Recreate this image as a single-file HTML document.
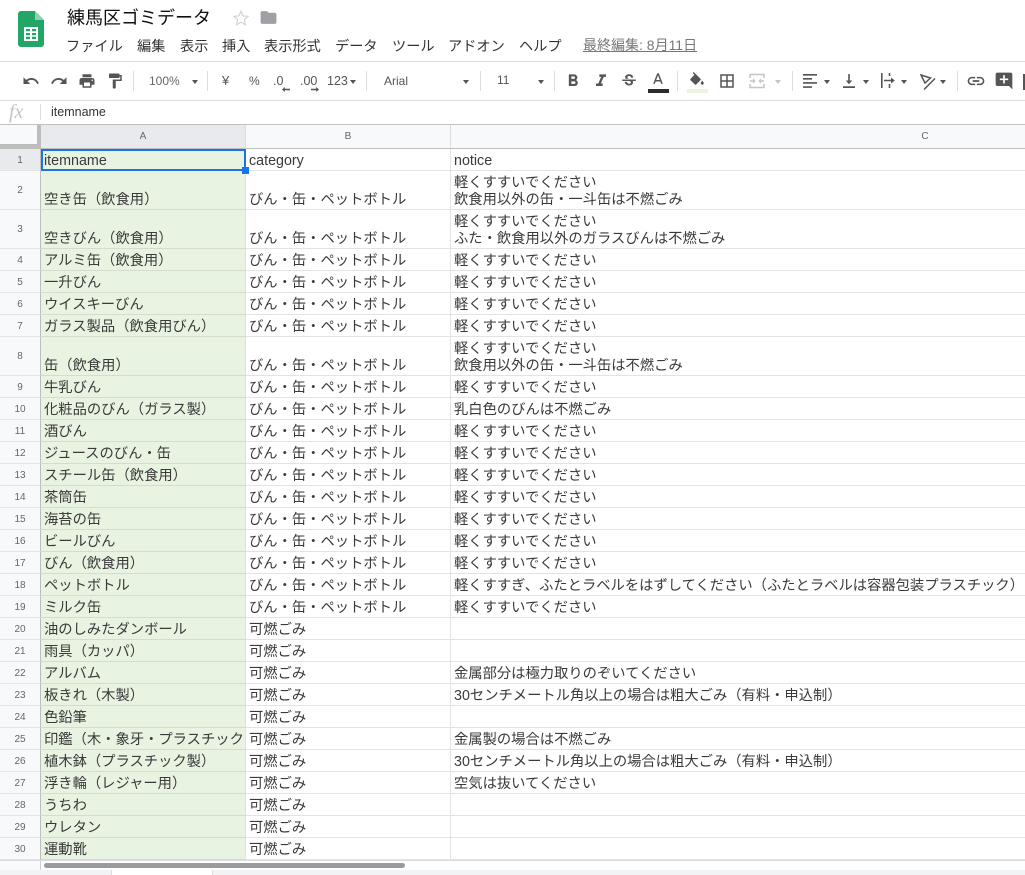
<!DOCTYPE html>
<html lang="ja"><head><meta charset="utf-8"><title>練馬区ゴミデータ</title>
<style>
html,body{margin:0;padding:0;background:#fff}
body{width:1025px;height:875px;position:relative;overflow:hidden;font-family:"Liberation Sans","Noto Sans CJK JP",sans-serif;color:#222}
.a{position:absolute;white-space:nowrap}
.m{top:39px;font-size:14.2px;line-height:16px;color:#333}
.t{top:73px;font-size:12px;line-height:16px;color:#555}
.s{position:absolute;top:71px;width:1px;height:20px;background:#dadce0}
.h{position:absolute;left:0;height:1px;width:1025px;background:#dadce0}
.ar{position:absolute;width:0;height:0;border-left:3.5px solid transparent;border-right:3.5px solid transparent;border-top:4px solid #555}
svg.i{position:absolute;fill:#555}
table{position:absolute;left:0;top:149px;border-collapse:separate;border-spacing:0;table-layout:fixed;width:1025px}
td,th{padding:0 0 0 3px;box-sizing:border-box;border-right:1px solid #e2e3e3;border-bottom:1px solid #e2e3e3;font-weight:normal;font-size:14.3px;line-height:17px;vertical-align:bottom;white-space:nowrap;overflow:hidden;color:#3a3a3a}
td:last-child{border-right:0}
th{background:#f8f9fa;font-size:10px;color:#666;text-align:center;padding:1px 0 0;vertical-align:middle;border-right:1px solid #bdbdbd;border-bottom:1px solid #e2e3e3}
td.g{background:#e8f3e2;border-bottom-color:#d3dccf;border-right-color:#dfe3dd}
tr{height:22px}tr.w{height:39px}
.ch{position:absolute;top:125px;height:23px;background:#f8f9fa;border-right:1px solid #dadce0;border-bottom:1px solid #bdbdbd;font-size:10px;line-height:23px;color:#666;text-align:center}
</style></head><body>
<svg class="a" style="left:18px;top:11px" width="26" height="36" viewBox="0 0 26 36"><path d="M3 0h14l9 9v24a3 3 0 0 1-3 3H3a3 3 0 0 1-3-3V3a3 3 0 0 1 3-3z" fill="#23a566"/><path d="M17 0l9 9h-9z" fill="#8ed1b1"/><path d="M6 16h14v14H6z" fill="#fff"/><path d="M8 18h4v2.300H8zm6 0h4v2.300h-4zM8 22h4v2.300H8zm6 0h4v2.300h-4zM8 25.800h4v2.300H8zm6 0h4v2.300h-4z" fill="#23a566"/></svg>
<div class="a" style="left:67px;top:7px;font-size:18px;line-height:22px;color:#111">練馬区ゴミデータ</div>
<svg class="a" style="left:232px;top:9px" width="18" height="18" viewBox="0 0 24 24"><path d="M12 3l2.700 6.200 6.800.6-5.100 4.500 1.500 6.700L12 17.500 6.100 21l1.500-6.700L2.500 9.800l6.800-.6z" fill="none" stroke="#d0d0d0" stroke-width="1.500"/></svg>
<svg class="a" style="left:259px;top:8px;fill:#9fa0a3" width="19" height="19" viewBox="0 0 24 24"><path d="M10 4H4c-1.100 0-1.990.9-1.990 2L2 18c0 1.100.9 2 2 2h16c1.100 0 2-.9 2-2V8c0-1.100-.9-2-2-2h-8l-2-2z"/></svg>
<div class="a m" style="left:66px">ファイル</div><div class="a m" style="left:137px">編集</div><div class="a m" style="left:180px">表示</div><div class="a m" style="left:222px">挿入</div><div class="a m" style="left:264px">表示形式</div><div class="a m" style="left:335px">データ</div><div class="a m" style="left:392px">ツール</div><div class="a m" style="left:448px">アドオン</div><div class="a m" style="left:519px">ヘルプ</div>
<div class="a m" style="left:583px;top:37px;font-size:14px;color:#777;text-decoration:underline">最終編集: 8月11日</div>
<div class="h" style="top:61px"></div><div class="h" style="top:100px"></div><div class="h" style="top:124px;background:#c0c0c0"></div>

<svg class="i" style="left:22px;top:72px" width="18" height="18" viewBox="0 0 24 24"><path d="M12.500 8c-2.650 0-5.050.99-6.900 2.600L2 7v9h9l-3.620-3.620c1.390-1.160 3.160-1.880 5.120-1.880 3.540 0 6.550 2.310 7.600 5.500l2.370-.78C21.080 11.030 17.150 8 12.500 8z"/></svg>
<svg class="i" style="left:50px;top:72px" width="18" height="18" viewBox="0 0 24 24"><path d="M18.400 10.600C16.550 8.990 14.150 8 11.500 8c-4.650 0-8.580 3.030-9.960 7.220L3.900 16c1.050-3.190 4.050-5.500 7.600-5.500 1.950 0 3.730.72 5.120 1.880L13 16h9V7l-3.600 3.600z"/></svg>
<svg class="i" style="left:78px;top:72px" width="18" height="18" viewBox="0 0 24 24"><path d="M19 8H5c-1.660 0-3 1.340-3 3v6h4v4h12v-4h4v-6c0-1.660-1.340-3-3-3zm-3 11H8v-5h8v5zm3-7c-.55 0-1-.45-1-1s.45-1 1-1 1 .45 1 1-.45 1-1 1zm-1-9H6v4h12V3z"/></svg>
<svg class="i" style="left:106px;top:72px" width="18" height="18" viewBox="0 0 24 24"><path d="M18 4V3c0-.55-.45-1-1-1H5c-.55 0-1 .45-1 1v4c0 .55.45 1 1 1h12c.55 0 1-.45 1-1V6h1v4H9v11c0 .55.45 1 1 1h2c.55 0 1-.45 1-1v-9h8V4h-3z"/></svg>
<div class="s" style="left:133px"></div>
<div class="a t" style="left:149px;color:#666">100%</div><div class="ar" style="left:192px;top:80px"></div>
<div class="s" style="left:207px"></div>
<div class="a t" style="left:222px;font-size:13px">¥</div><div class="a t" style="left:249px;font-size:12px">%</div>
<div class="a t" style="left:273px;font-size:12.500px">.0</div><svg class="a" style="left:282px;top:87px" width="8" height="5" viewBox="0 0 8 5" fill="#555"><path d="M0 2.500L2.800 0v1.800H8v1.400H2.800V5z"/></svg>
<div class="a t" style="left:300px;font-size:12.500px">.00</div><svg class="a" style="left:311px;top:87px" width="8" height="5" viewBox="0 0 8 5" fill="#555"><path d="M8 2.500L5.200 0v1.800H0v1.400h5.200V5z"/></svg>
<div class="a t" style="left:327px;font-size:12.500px">123</div><div class="ar" style="left:350px;top:80px"></div>
<div class="s" style="left:366px"></div>
<div class="a t" style="left:384px">Arial</div><div class="ar" style="left:463px;top:80px"></div>
<div class="s" style="left:480px"></div>
<div class="a t" style="left:497px;top:72px">11</div><div class="ar" style="left:538px;top:80px"></div>
<div class="s" style="left:554px"></div>
<svg class="i" style="left:563px;top:71px" width="20" height="20" viewBox="0 0 24 24"><path d="M15.600 10.790c.97-.67 1.650-1.770 1.650-2.790 0-2.260-1.750-4-4-4H7v14h7.040c2.090 0 3.710-1.700 3.710-3.790 0-1.520-.86-2.820-2.150-3.420zM10 6.500h3c.83 0 1.500.67 1.500 1.500s-.67 1.500-1.500 1.500h-3v-3zm3.500 9H10v-3h3.500c.83 0 1.500.67 1.500 1.500s-.67 1.500-1.500 1.500z"/></svg>
<svg class="i" style="left:591px;top:71px" width="20" height="20" viewBox="0 0 24 24"><path d="M10 4v3h2.210l-3.420 8H6v3h8v-3h-2.210l3.420-8H18V4z"/></svg>
<svg class="i" style="left:620px;top:72px" width="18" height="18" viewBox="0 0 24 24"><path d="M6.850 7.080C6.850 4.370 9.450 3 12.240 3c1.640 0 3 .49 3.900 1.280.77.65 1.460 1.730 1.460 3.240h-3.010c0-.31-.05-.59-.15-.85-.29-.86-1.200-1.280-2.250-1.280-1.860 0-2.340 1.020-2.340 1.700 0 .48.25.88.74 1.210.38.25.77.48 1.410.7H7.390c-.21-.34-.54-.89-.54-1.920zM21 12v-2H3v2h9.620c1.150.45 1.960.75 1.960 1.970 0 1-.81 1.670-2.280 1.670-1.540 0-2.930-.54-2.930-2.510H6.400c0 .55.08 1.130.24 1.580.81 2.290 3.320 3.300 5.670 3.300 2.270 0 5.030-1.020 5.030-4.270 0-.44-.02-1.100-.36-1.720H21V12z"/></svg>
<svg class="i" style="left:649px;top:71px" width="18" height="18" viewBox="0 0 24 24"><path d="M11 3L5.500 17h2.250l1.120-3h6.250l1.120 3h2.250L13 3h-2zm-1.380 9L12 5.670 14.380 12H9.620z"/></svg>
<div class="a" style="left:648px;top:89px;width:21px;height:4px;background:#2b2b2b"></div>
<div class="s" style="left:677px"></div>
<svg class="i" style="left:688px;top:72px" width="18" height="18" viewBox="0 0 24 24"><path d="M16.560 8.940L7.620 0 6.210 1.410l2.380 2.380-5.150 5.150c-.59.59-.59 1.540 0 2.120l5.500 5.500c.29.29.68.44 1.060.44s.77-.15 1.060-.44l5.500-5.500c.59-.58.59-1.530 0-2.120zM19 11.500s-2 2.170-2 3.500c0 1.100.9 2 2 2s2-.9 2-2c0-1.330-2-3.500-2-3.500z"/></svg>
<div class="a" style="left:687px;top:89px;width:21px;height:4px;background:#e8f3e2"></div>
<svg class="i" style="left:718px;top:72px" width="18" height="18" viewBox="0 0 24 24"><path d="M3 3v18h18V3H3zm8 16H5v-6h6v6zm0-8H5V5h6v6zm8 8h-6v-6h6v6zm0-8h-6V5h6v6z"/></svg>
<svg class="a" style="left:749px;top:73px" width="16" height="16" viewBox="0 0 16 16" fill="none" stroke="#c4c4c4" stroke-width="1.500"><path d="M1 5V1.500h14V5M1 11v3.500h14V11M1 8h5M10 8h5"/><path d="M4 6l2 2-2 2M12 6l-2 2 2 2" stroke-width="1"/></svg>
<div class="ar" style="left:775px;top:80px;border-top-color:#c4c4c4"></div>
<div class="s" style="left:792px"></div>
<svg class="a" style="left:803px;top:74px" width="14" height="14" viewBox="0 0 14 14" fill="#555"><path d="M0 0h14v1.600H0zM0 4h9v1.600H0zM0 8.100h14v1.600H0zM0 12.300h9v1.600H0z"/></svg><div class="ar" style="left:824px;top:80px"></div>
<svg class="a" style="left:843px;top:73px" width="12" height="15" viewBox="0 0 12 15" fill="#555"><path d="M0 13.300h12V15H0zM5.200 1h1.600v6.500h2.400L6 11.200 2.800 7.500h2.400z"/></svg><div class="ar" style="left:863px;top:80px"></div>
<svg class="a" style="left:881px;top:73px" width="14" height="15" viewBox="0 0 14 15" fill="#555"><path d="M0 0h1.600v15H0zM7.700 0h1.600v3H7.700zM7.700 11h1.600v4H7.700zM3 6.700h7V4.500l3.800 3-3.800 3V8.300H3z"/></svg><div class="ar" style="left:901px;top:80px"></div>
<svg class="a" style="left:920px;top:74px" width="16" height="16" viewBox="0 0 16 16" fill="none" stroke="#555" stroke-width="1.500"><path d="M1 1l9.500 3L5 9zM15 4.500L4 15.500"/></svg><div class="ar" style="left:940px;top:80px"></div>
<div class="s" style="left:957px"></div>
<svg class="i" style="left:966px;top:71px" width="20" height="20" viewBox="0 0 24 24"><path d="M3.900 12c0-1.710 1.390-3.100 3.100-3.100h4V7H7c-2.760 0-5 2.240-5 5s2.240 5 5 5h4v-1.900H7c-1.710 0-3.100-1.390-3.100-3.100zM8 13h8v-2H8v2zm9-6h-4v1.900h4c1.710 0 3.100 1.390 3.100 3.100s-1.390 3.100-3.100 3.100h-4V17h4c2.760 0 5-2.240 5-5s-2.240-5-5-5z"/></svg>
<svg class="i" style="left:994px;top:71px" width="20" height="20" viewBox="0 0 24 24"><path d="M21.990 4c0-1.100-.89-2-1.990-2H4c-1.100 0-2 .9-2 2v12c0 1.100.9 2 2 2h14l4 4-.01-18zM17 11h-4v4h-2v-4H7V9h4V5h2v4h4v2z"/></svg>
<div class="a" style="left:1023px;top:74px;width:2px;height:16px;background:#555"></div>

<div class="a" style="left:9px;top:102px;font-family:'Liberation Serif',serif;font-style:italic;font-size:20px;line-height:20px;color:#c4c4c4">fx</div>
<div class="a" style="left:40px;top:104px;width:1px;height:16px;background:#dadce0"></div>
<div class="a" style="left:51px;top:104px;font-size:12.500px;line-height:16px;color:#333">itemname</div>

<div class="a" style="left:0;top:125px;width:41px;height:24px;background:#f8f9fa"></div>
<div class="a" style="left:37px;top:125px;width:4px;height:24px;background:#bdbdbd"></div>
<div class="a" style="left:0;top:144px;width:37px;height:5px;background:#bdbdbd"></div>
<div class="ch" style="left:41px;width:204px;background:#e8eaed">A</div>
<div class="ch" style="left:246px;width:204px">B</div>
<div class="ch" style="left:451px;width:948px">C</div>

<table><colgroup><col style="width:41px"><col style="width:205px"><col style="width:205px"><col style="width:574px"></colgroup>
<tr><th style="background:#e8eaed">1</th><td class="g">itemname</td><td>category</td><td>notice</td></tr>
<tr class="w"><th>2</th><td class="g">空き缶（飲食用）</td><td>びん・缶・ペットボトル</td><td>軽くすすいでください<br>飲食用以外の缶・一斗缶は不燃ごみ</td></tr>
<tr class="w"><th>3</th><td class="g">空きびん（飲食用）</td><td>びん・缶・ペットボトル</td><td>軽くすすいでください<br>ふた・飲食用以外のガラスびんは不燃ごみ</td></tr>
<tr><th>4</th><td class="g">アルミ缶（飲食用）</td><td>びん・缶・ペットボトル</td><td>軽くすすいでください</td></tr>
<tr><th>5</th><td class="g">一升びん</td><td>びん・缶・ペットボトル</td><td>軽くすすいでください</td></tr>
<tr><th>6</th><td class="g">ウイスキーびん</td><td>びん・缶・ペットボトル</td><td>軽くすすいでください</td></tr>
<tr><th>7</th><td class="g">ガラス製品（飲食用びん）</td><td>びん・缶・ペットボトル</td><td>軽くすすいでください</td></tr>
<tr class="w"><th>8</th><td class="g">缶（飲食用）</td><td>びん・缶・ペットボトル</td><td>軽くすすいでください<br>飲食用以外の缶・一斗缶は不燃ごみ</td></tr>
<tr><th>9</th><td class="g">牛乳びん</td><td>びん・缶・ペットボトル</td><td>軽くすすいでください</td></tr>
<tr><th>10</th><td class="g">化粧品のびん（ガラス製）</td><td>びん・缶・ペットボトル</td><td>乳白色のびんは不燃ごみ</td></tr>
<tr><th>11</th><td class="g">酒びん</td><td>びん・缶・ペットボトル</td><td>軽くすすいでください</td></tr>
<tr><th>12</th><td class="g">ジュースのびん・缶</td><td>びん・缶・ペットボトル</td><td>軽くすすいでください</td></tr>
<tr><th>13</th><td class="g">スチール缶（飲食用）</td><td>びん・缶・ペットボトル</td><td>軽くすすいでください</td></tr>
<tr><th>14</th><td class="g">茶筒缶</td><td>びん・缶・ペットボトル</td><td>軽くすすいでください</td></tr>
<tr><th>15</th><td class="g">海苔の缶</td><td>びん・缶・ペットボトル</td><td>軽くすすいでください</td></tr>
<tr><th>16</th><td class="g">ビールびん</td><td>びん・缶・ペットボトル</td><td>軽くすすいでください</td></tr>
<tr><th>17</th><td class="g">びん（飲食用）</td><td>びん・缶・ペットボトル</td><td>軽くすすいでください</td></tr>
<tr><th>18</th><td class="g">ペットボトル</td><td>びん・缶・ペットボトル</td><td>軽くすすぎ、ふたとラベルをはずしてください（ふたとラベルは容器包装プラスチック）</td></tr>
<tr><th>19</th><td class="g">ミルク缶</td><td>びん・缶・ペットボトル</td><td>軽くすすいでください</td></tr>
<tr><th>20</th><td class="g">油のしみたダンボール</td><td>可燃ごみ</td><td></td></tr>
<tr><th>21</th><td class="g">雨具（カッパ）</td><td>可燃ごみ</td><td></td></tr>
<tr><th>22</th><td class="g">アルバム</td><td>可燃ごみ</td><td>金属部分は極力取りのぞいてください</td></tr>
<tr><th>23</th><td class="g">板きれ（木製）</td><td>可燃ごみ</td><td>30センチメートル角以上の場合は粗大ごみ（有料・申込制）</td></tr>
<tr><th>24</th><td class="g">色鉛筆</td><td>可燃ごみ</td><td></td></tr>
<tr><th>25</th><td class="g"><div style="width:200px;overflow:hidden">印鑑（木・象牙・プラスチック）</div></td><td>可燃ごみ</td><td>金属製の場合は不燃ごみ</td></tr>
<tr><th>26</th><td class="g">植木鉢（プラスチック製）</td><td>可燃ごみ</td><td>30センチメートル角以上の場合は粗大ごみ（有料・申込制）</td></tr>
<tr><th>27</th><td class="g">浮き輪（レジャー用）</td><td>可燃ごみ</td><td>空気は抜いてください</td></tr>
<tr><th>28</th><td class="g">うちわ</td><td>可燃ごみ</td><td></td></tr>
<tr><th>29</th><td class="g">ウレタン</td><td>可燃ごみ</td><td></td></tr>
<tr><th>30</th><td class="g">運動靴</td><td>可燃ごみ</td><td></td></tr>
</table>
<div class="a" style="left:41px;top:149px;width:205px;height:22px;box-sizing:border-box;border:2px solid #1a73e8"></div>
<div class="a" style="left:242px;top:167px;width:7px;height:7px;background:#1a73e8"></div>

<div class="a" style="left:0;top:860px;width:1025px;height:10px;background:#fff;border-top:1px solid #dadce0;box-sizing:border-box"></div>
<div class="a" style="left:0;top:861px;width:41px;height:9px;background:#f8f9fa"></div>
<div class="a" style="left:40px;top:861px;width:1px;height:9px;background:#d0d0d0"></div>
<div class="a" style="left:44px;top:863px;width:361px;height:5px;border-radius:3px;background:#9b9b9b"></div>
<div class="a" style="left:0;top:870px;width:1025px;height:5px;background:#f1f3f4"></div>
<div class="a" style="left:111px;top:870px;width:100px;height:5px;background:#fff;border-left:1px solid #dadce0;border-right:1px solid #dadce0"></div>
</body></html>
